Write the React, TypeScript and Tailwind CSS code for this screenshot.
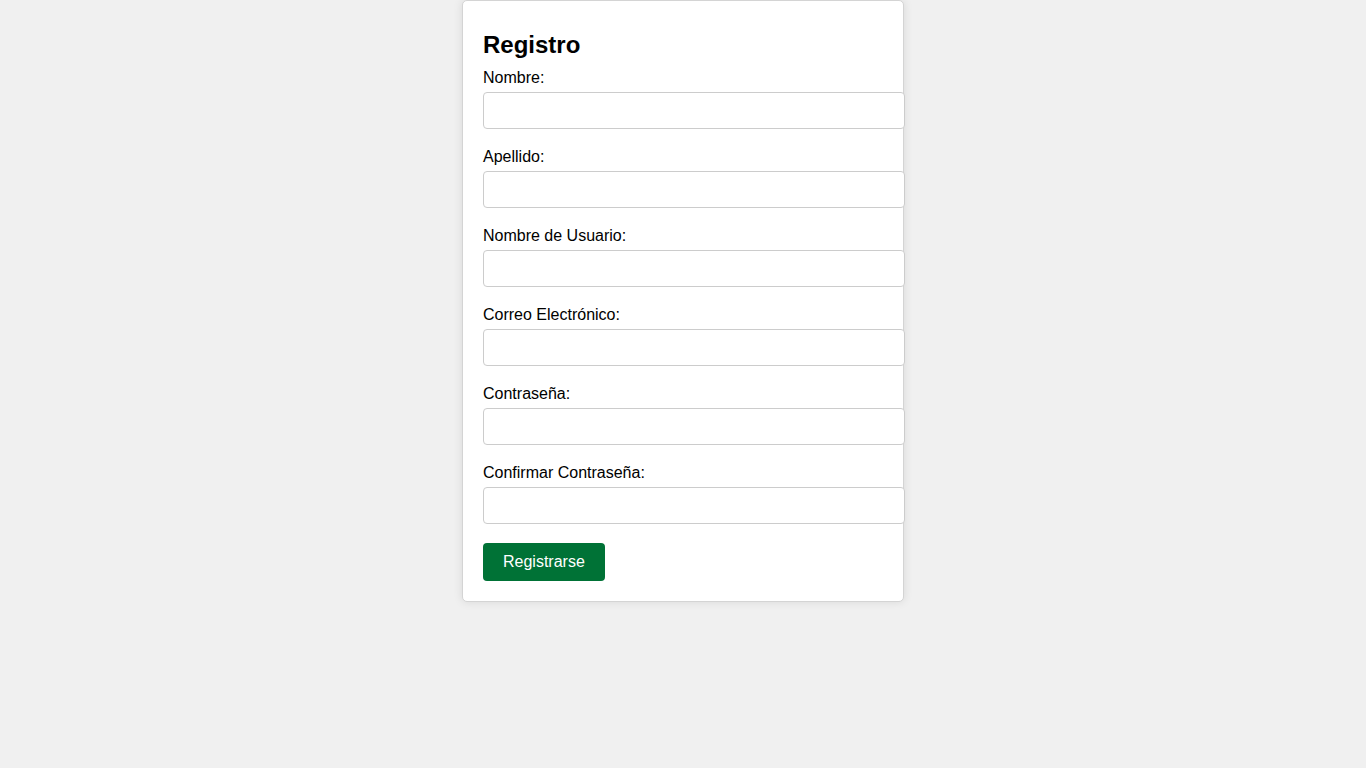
const fields = [
  { id: "nombre", label: "Nombre:", type: "text" },
  { id: "apellido", label: "Apellido:", type: "text" },
  { id: "usuario", label: "Nombre de Usuario:", type: "text" },
  { id: "correo", label: "Correo Electrónico:", type: "email" },
  { id: "password", label: "Contraseña:", type: "password" },
  { id: "confirmar", label: "Confirmar Contraseña:", type: "password" },
] as const;

export default function App() {
  return (
    <div className="flex min-h-screen justify-center bg-[#f0f0f0] font-['Liberation_Sans',Arial,sans-serif] text-black">
      <div className="self-start">
        <form
          className="w-[442px] rounded-[5px] border border-[#d4d4d4] bg-white px-5 pt-[30px] pb-5 shadow-[0_0_10px_rgba(0,0,0,0.1)]"
          onSubmit={(e) => e.preventDefault()}
        >
          <h2 className="m-0 text-[24px] leading-[28px] font-bold">Registro</h2>
          <div className="mt-[10px] flex flex-col">
            {fields.map((field) => (
              <div className="mb-[19px] flex flex-col" key={field.id}>
                <label className="mb-[5px] text-[16px] leading-[18px]" htmlFor={field.id}>
                  {field.label}
                </label>
                <input
                  className="h-[37px] w-[422px] rounded-[4px] border border-[#cccccc] bg-white px-[10px] text-[16px] outline-none"
                  id={field.id}
                  type={field.type}
                />
              </div>
            ))}
          </div>
          <button
            className="h-[38px] rounded-[4px] bg-[#007236] px-5 text-[16px] leading-[18px] text-white"
            type="submit"
          >
            Registrarse
          </button>
        </form>
      </div>
    </div>
  );
}
